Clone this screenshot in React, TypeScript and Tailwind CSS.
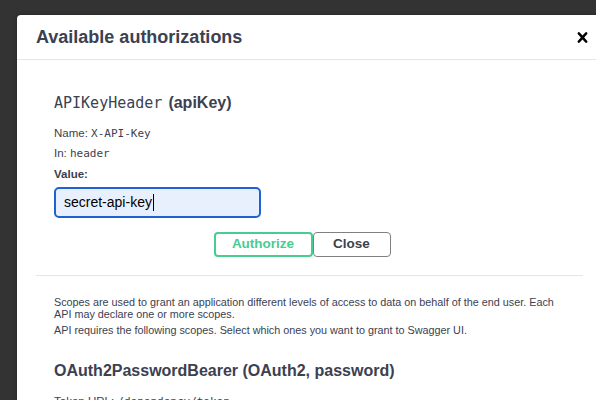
import React from 'react';

const sans = "font-['Liberation_Sans',Arial,sans-serif]";
const mono = "font-['DejaVu_Sans_Mono','Liberation_Mono',monospace]";

const CloseIcon = () => (
  <svg width="21" height="21" viewBox="0 0 20 20" aria-hidden="true">
    <path
      fill="#000"
      d="M14.348 14.849a1.2 1.2 0 0 1-1.697 0L10 11.819l-2.651 3.029a1.2 1.2 0 1 1-1.697-1.697l2.758-3.15-2.759-3.152a1.2 1.2 0 1 1 1.697-1.697L10 8.183l2.651-3.031a1.2 1.2 0 1 1 1.697 1.697l-2.758 3.152 2.758 3.15a1.2 1.2 0 0 1 0 1.698z"
    />
  </svg>
);

const App = () => {
  return (
    <div className={`h-[400px] w-[596px] overflow-hidden bg-[#333333] pt-[15px] pl-[17px] ${sans} text-[#3b4151]`}>
      {/* Modal */}
      <div className="h-[400px] w-[579px] rounded-tl-[4px] bg-white shadow-[0_0_4px_rgba(0,0,0,0.3)]">
        {/* Header */}
        <div className="flex h-[45px] items-center justify-between border-b border-[#e6e6e6] pl-[19px] pr-[3px]">
          <h3 className="text-[18px] font-bold leading-[22px] text-[#3b4151]">Available authorizations</h3>
          <CloseIcon />
        </div>

        <div className="pl-[19px] pr-[13px]">
          {/* API key section */}
          <div className="pl-[18px] pt-[33px]">
            <h4 className="flex items-baseline text-[16px] leading-[20px]">
              <span className={`${mono} text-[15px] text-[#3b4151]`}>APIKeyHeader</span>
              <span className="ml-[6px] font-bold">(apiKey)</span>
            </h4>
            <div className="mt-[12px] text-[11.5px] leading-[16px]">
              Name: <span className={`${mono} text-[11px]`}>X-API-Key</span>
            </div>
            <div className="mt-[3px] text-[11.5px] leading-[16px]">
              In: <span className={`${mono} text-[11px]`}>header</span>
            </div>
            <div className="mt-[4px] text-[11.5px] font-bold leading-[16px]">Value:</div>
            <div className="mt-[5px] flex h-[31px] w-[207px] items-center rounded-[5px] border-2 border-[#1f63d2] bg-[#e8f0fe] pl-[8px] text-[14px] text-black">
              secret-api-key
              <span className="ml-[1px] inline-block h-[17px] w-px bg-black" />
            </div>
            <div className="mt-[14px] flex justify-center pr-[33px]">
              <button className="h-[25px] w-[99px] rounded-[4px] border-2 border-[#49cc90] text-[13.5px] font-bold text-[#49cc90]">
                Authorize
              </button>
              <button className="h-[25px] w-[78px] rounded-[4px] border-[1.5px] border-[#808080] text-[13.5px] font-bold text-[#3b4151]">
                Close
              </button>
            </div>
          </div>

          <div className="mt-[18px] border-t border-[#e6e6e6]" />

          {/* OAuth2 section */}
          <div className="pl-[18px] pt-[20px]">
            <p className="max-w-[505px] text-[10.8px] leading-[12px]">
              Scopes are used to grant an application different levels of access to data on behalf of the end user. Each API may declare one or more scopes.
            </p>
            <p className="mt-[4px] text-[10.8px] leading-[12px]">
              API requires the following scopes. Select which ones you want to grant to Swagger UI.
            </p>
            <h4 className="mt-[25px] text-[16px] font-bold leading-[20px]">OAuth2PasswordBearer (OAuth2, password)</h4>
            <div className="mt-[12px] text-[11.5px] leading-[16px]">
              Token URL: <span className={`${mono} text-[11px]`}>/dependency/token</span>
            </div>
          </div>
        </div>
      </div>
    </div>
  );
};

export default App;
